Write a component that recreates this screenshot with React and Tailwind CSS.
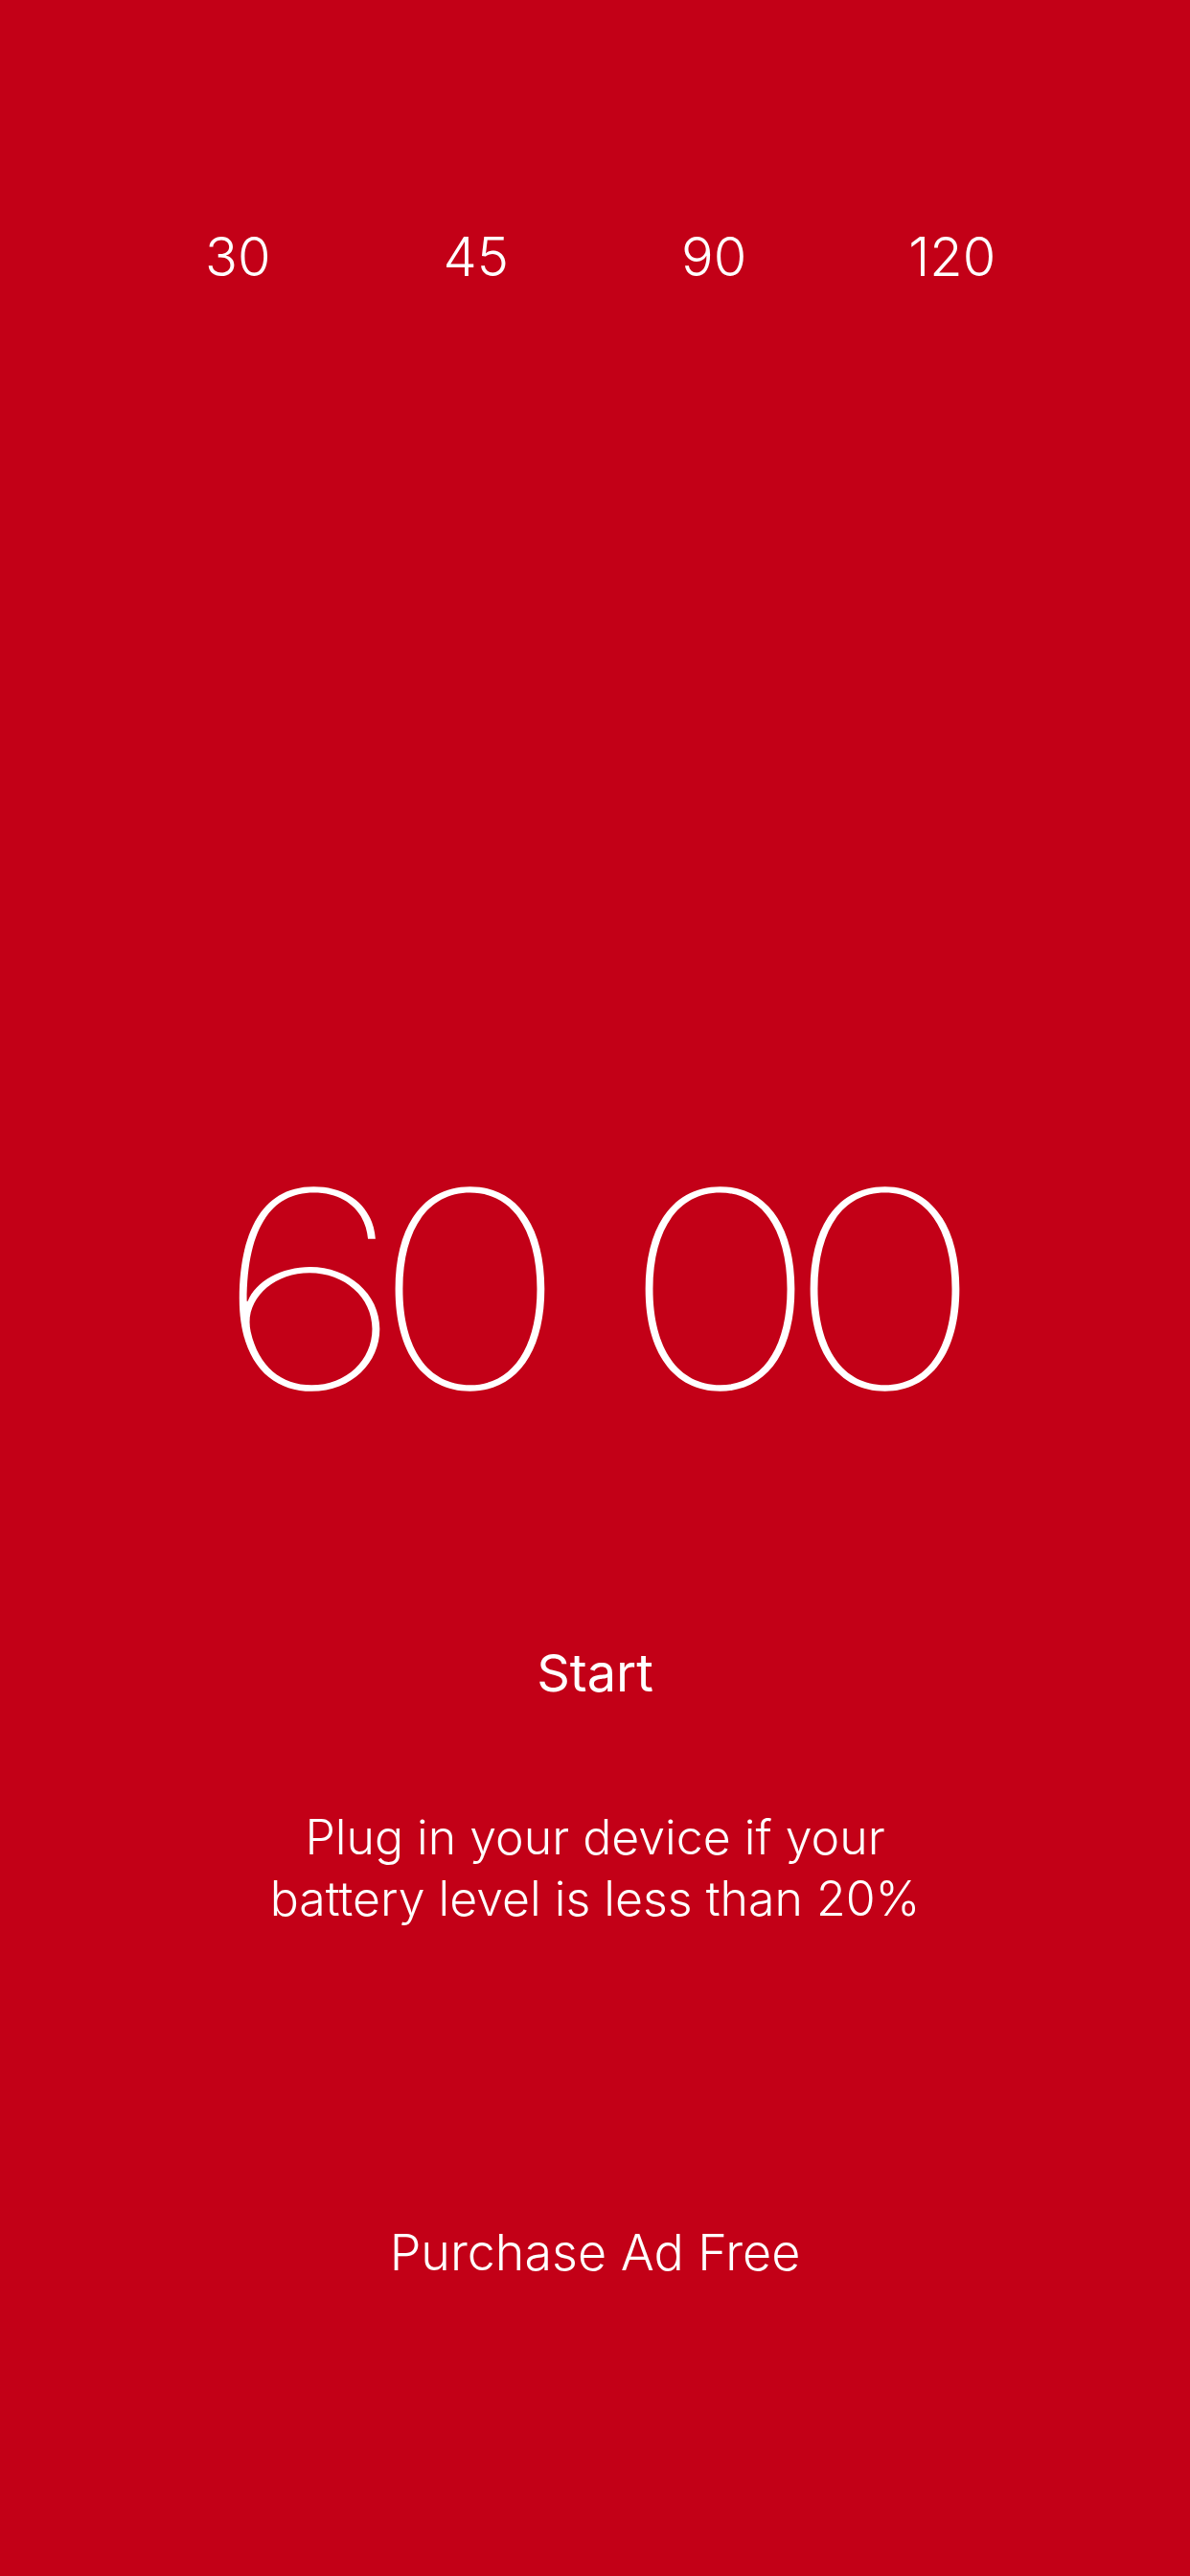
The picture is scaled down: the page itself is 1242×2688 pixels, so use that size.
const PRESETS = [30, 45, 90, 120];

export default function App() {
  return (
    <div className="min-h-screen w-full bg-[#c30017] text-white font-['Inter',sans-serif] flex flex-col items-center">
      <div className="w-full grid grid-cols-4 px-[124px] pt-[240px]">
        {PRESETS.map((m) => (
          <button
            key={m}
            className="text-center text-[56px] leading-none font-light"
          >
            {m}
          </button>
        ))}
      </div>

      <div className="mt-[906px] pr-[20px] flex gap-[73px] text-[286px] leading-none font-thin tracking-[-28px] scale-x-[1.22]">
        <span>60</span>
        <span>00</span>
      </div>

      <button className="mt-[231px] text-[54px] leading-none font-normal">
        Start
      </button>

      <p className="mt-[112px] text-center text-[50px] leading-[64px] font-light">
        Plug in your device if your
        <br />
        battery level is less than 20%
      </p>

      <button className="mt-[312px] text-[52px] leading-none font-light">
        Purchase Ad Free
      </button>
    </div>
  );
}
